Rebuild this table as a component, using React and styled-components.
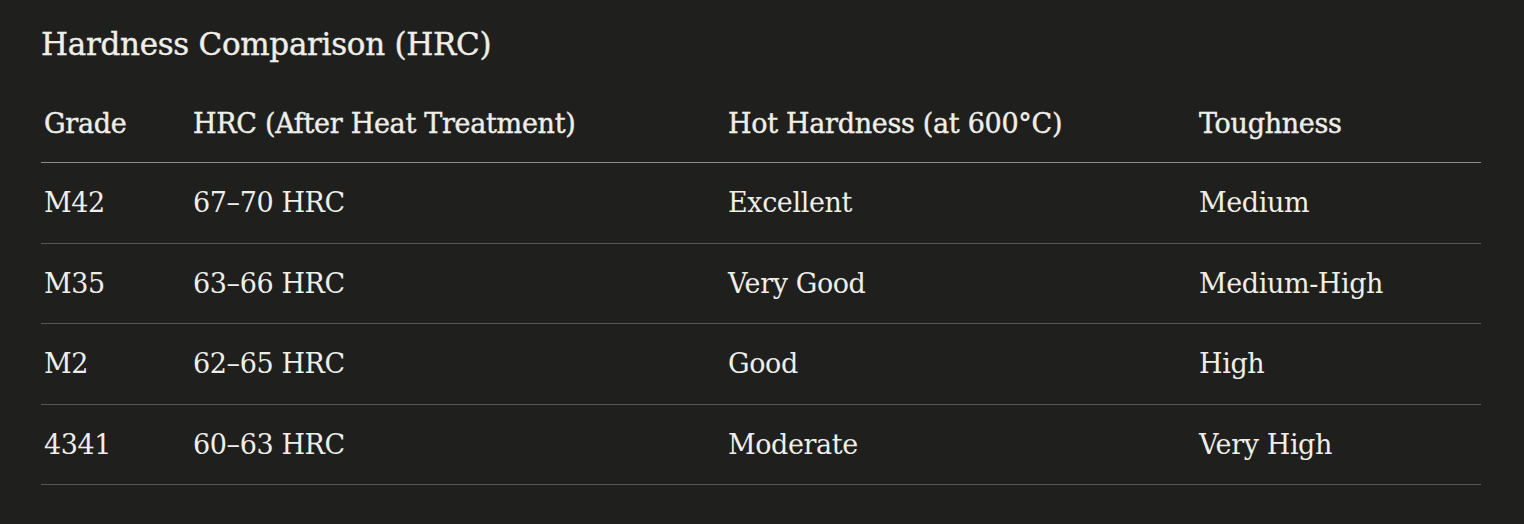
import React from 'react'
import styled, { createGlobalStyle } from 'styled-components'

const GlobalStyle = createGlobalStyle`
  html, body {
    margin: 0;
    background: #1f201e;
  }
  body {
    font-family: "DejaVu Serif", "Liberation Serif", serif;
    color: #efeee8;
  }
`

const rows = [
  ['M42', '67–70 HRC', 'Excellent', 'Medium'],
  ['M35', '63–66 HRC', 'Very Good', 'Medium-High'],
  ['M2', '62–65 HRC', 'Good', 'High'],
  ['4341', '60–63 HRC', 'Moderate', 'Very High'],
]

function App() {
  return (
    <Page>
      <GlobalStyle />
      <Title>Hardness Comparison (HRC)</Title>
      <Table>
        <colgroup>
          <col style={{ width: 149 }} />
          <col style={{ width: 535 }} />
          <col style={{ width: 471 }} />
          <col />
        </colgroup>
        <thead>
          <tr>
            <Th>Grade</Th>
            <Th>HRC (After Heat Treatment)</Th>
            <Th>Hot Hardness (at 600°C)</Th>
            <Th>Toughness</Th>
          </tr>
        </thead>
        <tbody>
          {rows.map((r) => (
            <tr key={r[0]}>
              {r.map((c, i) => (
                <Td key={i}>{c}</Td>
              ))}
            </tr>
          ))}
        </tbody>
      </Table>
    </Page>
  )
}

export default App

const Page = styled.div`
  width: 1524px;
  height: 524px;
  box-sizing: border-box;
  padding: 23px 43px 0 41px;
  background: #1f201e;
`

const Title = styled.h2`
  margin: 0;
  font-size: 31px;
  font-weight: 400;
  line-height: 42px;
  letter-spacing: -0.3px;
  -webkit-text-stroke: 0.4px #efeee8;
`

const Table = styled.table`
  width: 1440px;
  margin-top: 20px;
  border-collapse: collapse;
  table-layout: fixed;
`

const Th = styled.th`
  text-align: left;
  font-size: 27px;
  font-weight: 400;
  height: 77px;
  padding: 0 3px;
  vertical-align: middle;
  border-bottom: 1px solid #8c8c88;
  letter-spacing: -0.3px;
  -webkit-text-stroke: 0.4px #efeee8;
`

const Td = styled.td`
  font-size: 27px;
  font-weight: 400;
  height: 79.5px;
  padding: 0 3px;
  vertical-align: middle;
  border-bottom: 1px solid #575855;
  letter-spacing: -0.4px;
`
